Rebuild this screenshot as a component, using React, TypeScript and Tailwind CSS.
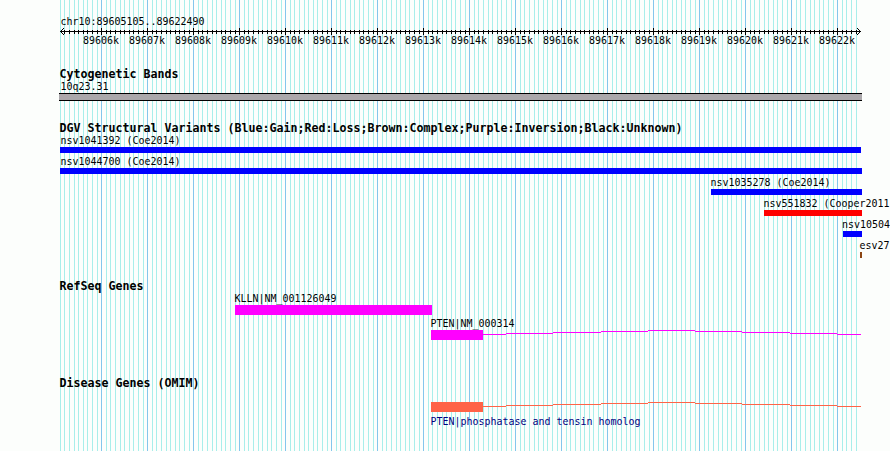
import type { ReactNode } from 'react';

const OFFSETS = [0, 5, 9, 14, 19, 23, 28, 32, 37, 42];
const MAJORS = Array.from({ length: 17 }, (_, i) => 101 + i * 46);

const GRID = [55, ...MAJORS]
  .flatMap((m) => OFFSETS.map((o) => ({ x: m + o, major: o === 0 })))
  .filter((l) => l.x >= 60 && l.x <= 856);

// Steps of the connector line to the right of the PTEN box: [start, end, row]
const STEPS = [
  [483, 506, 4], [506, 553, 3], [553, 601, 2], [601, 648, 1], [648, 695, 0],
  [695, 742, 1], [742, 790, 2], [790, 837, 3], [837, 861, 4],
];

function Grid() {
  return (
    <svg className="absolute inset-0" width="890" height="451" shapeRendering="crispEdges">
      {GRID.map((l) => (
        <rect key={l.x} x={l.x} y="0" width="1" height="451" fill={l.major ? '#84c6ec' : '#a8eeea'} />
      ))}
    </svg>
  );
}

function Ruler() {
  return (
    <svg className="block" width="890" height="7" shapeRendering="crispEdges">
      <rect x="60" y="3" width="801" height="1" />
      {GRID.filter((l) => l.x > 60).map((l) => (
        <rect key={l.x} x={l.x} y={l.major ? 0 : 2} width="1" height={l.major ? 7 : 4} />
      ))}
      {[1, 2, 3].map((d) => (
        <g key={d}>
          <rect x={60 + d} y={3 - d} width="1" height="1" />
          <rect x={60 + d} y={3 + d} width="1" height="1" />
          <rect x={860 - d} y={3 - d} width="1" height="1" />
          <rect x={860 - d} y={3 + d} width="1" height="1" />
        </g>
      ))}
    </svg>
  );
}

function Title({ children }: { children: ReactNode }) {
  return (
    <h2 className="ml-[59.5px] h-[13px] whitespace-pre text-[11.63px] leading-[15px] font-bold">{children}</h2>
  );
}

function Label({ className = '', children }: { className?: string; children: ReactNode }) {
  return (
    <div className={`h-[13px] w-max origin-center scale-y-110 whitespace-pre text-[9.97px] leading-[13px] ${className}`}>
      {children}
    </div>
  );
}

function PtenModel({ color }: { color: string }) {
  return (
    <svg className="block" width="890" height="10" fill={color} shapeRendering="crispEdges">
      <rect x="431" y="0" width="52" height="10" />
      {STEPS.map(([a, b, y]) => (
        <rect key={a} x={a} y={y} width={b - a} height="1" />
      ))}
    </svg>
  );
}

const VARIANTS = [
  { name: 'nsv1041392 (Coe2014)', text: 'ml-[60.5px]', bar: 'ml-[60px] w-[801px] bg-[#0000ff]' },
  { name: 'nsv1044700 (Coe2014)', text: 'ml-[60.5px]', bar: 'ml-[60px] w-[802px] bg-[#0000ff]' },
  { name: 'nsv1035278 (Coe2014)', text: 'ml-[710.5px]', bar: 'ml-[711px] w-[151px] bg-[#0000ff]' },
  { name: 'nsv551832 (Cooper2011', text: 'ml-[763.5px]', bar: 'ml-[764px] w-[98px] bg-[#ff0000]' },
  { name: 'nsv10504', text: 'ml-[842px]', bar: 'ml-[843px] w-[19px] bg-[#0000ff]' },
  { name: 'esv27', text: 'ml-[859.5px]', bar: 'ml-[860px] w-[2px] bg-[#8b4513]' },
];

export default function App() {
  return (
    <div className="relative h-[451px] w-[890px] overflow-hidden bg-[#fcfefc] font-['DejaVu_Sans_Mono',monospace] text-black">
      <Grid />
      <main className="relative flex h-full flex-col pt-[15px]">
        <section className="h-[52px]">
          <Label className="ml-[60.5px]">chr10:89605105..89622490</Label>
          <Ruler />
          <div className="-mt-px ml-[78px] flex">
            {MAJORS.map((x, i) => (
              <div key={x} className="flex w-[46px] shrink-0 justify-center">
                <Label>{`${89606 + i}k`}</Label>
              </div>
            ))}
          </div>
        </section>
        <section className="h-[54px]">
          <Title>Cytogenetic Bands</Title>
          <Label className="ml-[60.5px]">10q23.31</Label>
          <div className="ml-[59px] h-2 w-[803px] border-y border-black bg-[#aba8ab]" />
        </section>
        <section className="h-[158px]">
          <Title>DGV Structural Variants (Blue:Gain;Red:Loss;Brown:Complex;Purple:Inversion;Black:Unknown)</Title>
          {VARIANTS.map((v) => (
            <div key={v.name} className="h-[21px]">
              <Label className={v.text}>{v.name}</Label>
              <div className={`h-1.5 ${v.bar}`} />
            </div>
          ))}
        </section>
        <section className="h-[97px]">
          <Title>RefSeq Genes</Title>
          <Label className="ml-[234.5px]">KLLN|NM_001126049</Label>
          <div className="mb-0.5 ml-[235px] h-2.5 w-[197px] bg-[#ff00ff]" />
          <Label className="ml-[430.5px]">PTEN|NM_000314</Label>
          <PtenModel color="#ff00ff" />
        </section>
        <section>
          <Title>Disease Genes (OMIM)</Title>
          <div className="pt-[13px] pb-[3px]">
            <PtenModel color="#ff6347" />
          </div>
          <Label className="ml-[430.5px] text-[#000080]">PTEN|phosphatase and tensin homolog</Label>
        </section>
      </main>
    </div>
  );
}
